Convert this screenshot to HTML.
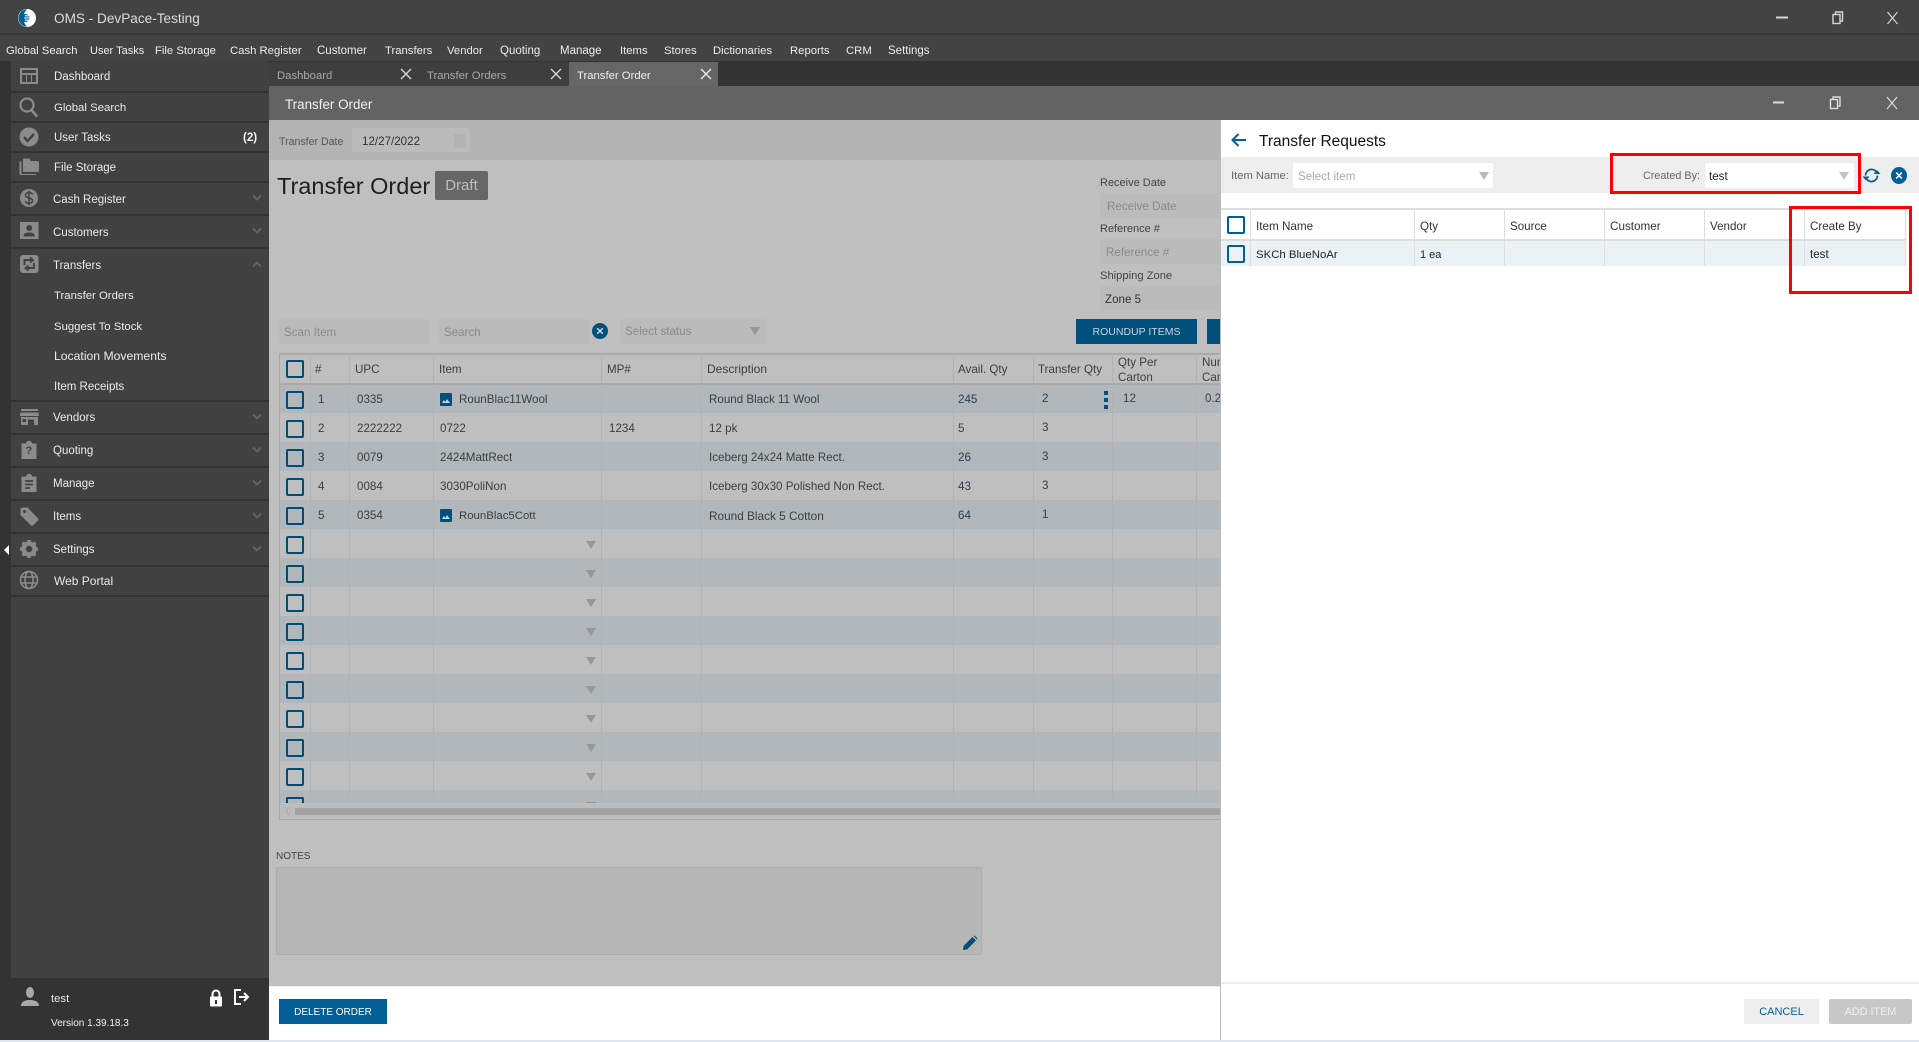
<!DOCTYPE html>
<html lang="en"><head><meta charset="utf-8"><title>OMS - DevPace-Testing</title>
<style>
html,body{margin:0;padding:0;width:1919px;height:1042px;overflow:hidden;background:#fff}
body{position:relative;font:11.6px/16px "Liberation Sans",Arial,sans-serif;color:#3a3a3a}
div,span,svg{position:absolute;box-sizing:border-box}
.t{white-space:nowrap;height:16px}
.m{color:#ececec;top:43px;font-size:11.3px}
.s{color:#eaeaea;left:54px;font-size:11.5px}
.sep{left:11px;width:258px;height:2px;background:#333}
.chev{left:251px;width:12px;height:8px}
.ic{left:17px;width:24px;height:24px;fill:#8b8b8b}
.tab{top:62px;height:24px;width:150px;background:#3e3e3e;color:#a9a9a9;padding:6px 0 0 8px;font-size:11.3px}
.cb{left:286px;width:18px;height:18px;border:2px solid #004c75;border-radius:2px}
.cbr{left:1227px;width:18px;height:18px;border:2px solid #005f96;border-radius:2px}
.row{left:280px;width:941px;height:29px}
.c{background:#b1b7ba}
.v{top:353px;width:1px;height:450px;background:#b0b2b3}
.vr{top:209px;width:1px;height:57px;background:#d9dfe2}
.tri{left:587px;width:0;height:0;border-left:5px solid transparent;border-right:5px solid transparent;border-top:8px solid #979797}
.in{background:#bbb;border-radius:2px;color:#8a8a8a;padding:6px 0 0 5px;height:25px}
.d{color:#3d3d3d;transform:translateY(1px)}
.r{color:#222}
.lb{font-size:11px;color:#444}
.redbox{border:3px solid #f00;background:transparent}
</style></head><body>

<!-- title bar -->
<div style="left:0;top:0;width:1919px;height:62px;background:#434343"></div>
<div style="left:0;top:33px;width:1919px;height:2px;background:#363636"></div>
<svg style="left:17px;top:8px;width:20px;height:20px" viewBox="0 0 20 20"><circle cx="10" cy="10" r="9" fill="#fff"/><path d="M10 1.400A8.600 8.600 0 0 0 10 18.600Q5.500 14 7 10Q5.500 6 10 1.400Z" fill="#005f96"/><circle cx="8.500" cy="10" r="4" fill="#005f96"/><path d="M8 7.800h4M7 10h6M8 12.200h4" stroke="#fff" stroke-width="1.100"/></svg>
<div class="t" style="left:54px;top:11px;font-size:13.6px;color:#dcdcdc">OMS - DevPace-Testing</div>
<svg style="left:1775px;top:9px;width:130px;height:18px" viewBox="0 0 130 18" fill="none" stroke="#d5d5d5" stroke-width="1.400"><path d="M1 8.500h12" stroke-width="2"/><rect x="58" y="5.500" width="7" height="9"/><path d="M60.500 5V3h7v9h-2"/><path d="M112.500 3l10 12M122.500 3l-10 12" stroke-width="1.200"/></svg>
<div class="t m" style="left:6px">Global Search</div>
<div class="t m" style="left:90px;font-size:11px">User Tasks</div>
<div class="t m" style="left:155px">File Storage</div>
<div class="t m" style="left:230px">Cash Register</div>
<div class="t m" style="left:317px;font-size:11.5px">Customer</div>
<div class="t m" style="left:385px">Transfers</div>
<div class="t m" style="left:447px">Vendor</div>
<div class="t m" style="left:500px;font-size:11.5px">Quoting</div>
<div class="t m" style="left:560px;font-size:11.5px">Manage</div>
<div class="t m" style="left:620px">Items</div>
<div class="t m" style="left:664px">Stores</div>
<div class="t m" style="left:713px">Dictionaries</div>
<div class="t m" style="left:790px">Reports</div>
<div class="t m" style="left:846px">CRM</div>
<div class="t m" style="left:888px;font-size:11.5px">Settings</div>

<!-- sidebar -->
<div style="left:0;top:61px;width:11px;height:979px;background:#333"></div>
<div style="left:11px;top:61px;width:258px;height:917px;background:#414141"></div>
<div style="left:0;top:978px;width:269px;height:62px;background:#333"></div>
<div style="left:4px;top:545px;width:0;height:0;border-top:5px solid transparent;border-bottom:5px solid transparent;border-right:5px solid #fff"></div>

<div class="sep" style="top:91px"></div><div class="sep" style="top:121px"></div><div class="sep" style="top:151px"></div><div class="sep" style="top:181px"></div><div class="sep" style="top:214px"></div><div class="sep" style="top:247px"></div><div class="sep" style="top:400px"></div><div class="sep" style="top:433px"></div><div class="sep" style="top:466px"></div><div class="sep" style="top:499px"></div><div class="sep" style="top:532px"></div><div class="sep" style="top:565px"></div><div class="sep" style="top:595px"></div>

<svg class="ic" style="top:65px" viewBox="0 0 24 24"><path d="M3 3h18v16H3z M5 5v3h14V5z M5 10v7h4v-7z M10 10v7h4v-7z M15 10v7h4v-7z" fill-rule="evenodd"/></svg>
<svg class="ic" style="top:95px" viewBox="0 0 24 24" fill="none" stroke="#8b8b8b" stroke-width="2.200"><circle cx="10" cy="10" r="6.500" fill="none"/><path d="M14.500 15l5.500 6.500" stroke-width="2.600"/></svg>
<svg class="ic" style="top:125px" viewBox="0 0 24 24"><circle cx="12" cy="12" r="9.500"/><path d="M7 12l3.500 4 6.500-7" fill="none" stroke="#414141" stroke-width="2.400"/></svg>
<svg class="ic" style="top:155px" viewBox="0 0 24 24"><path d="M6 5c0-1 .5-1.500 1.500-1.500h5L14 6h6.500c1 0 1.500.5 1.500 1.500V17H6z"/><path d="M2.500 6.500H4.500V19H19v1H4c-1 0-1.500-.5-1.500-1.500z"/></svg>
<svg class="ic" style="top:186px" viewBox="0 0 24 24"><circle cx="12" cy="12" r="9"/><path d="M15.500 8.500c-.5-1.500-2-2-3.500-2-2 0-3.500 1-3.500 2.700 0 3.600 7 2 7 5.600 0 1.700-1.500 2.700-3.500 2.700s-3.200-.8-3.700-2.300M12 4.800v14.400" fill="none" stroke="#414141" stroke-width="1.500"/></svg>
<svg class="ic" style="top:219px" viewBox="0 0 24 24"><path d="M3 3h18.500v17H3z"/><circle cx="12.200" cy="9" r="3" fill="#414141"/><path d="M6.500 17.500c0-3 2.500-4 5.700-4s5.700 1 5.700 4z" fill="#414141"/></svg>
<svg class="ic" style="top:252px" viewBox="0 0 24 24"><rect x="3" y="3" width="18.500" height="18" rx="3"/><path d="M7.500 13V8h7.500M13 5.500L16 8l-3 2.500M17 11v5H9.500M11.500 13.500L8.500 16l3 2.500" fill="none" stroke="#414141" stroke-width="1.900"/></svg>
<svg class="ic" style="top:405px" viewBox="0 0 24 24"><path d="M4 4h17v2H4z"/><path d="M3.500 7.500h18L22 11H3z"/><path d="M4 12h17v8h-4v-5.500h-6V20H4zM5.500 14v3h3.500v-3z" fill-rule="evenodd"/></svg>
<svg class="ic" style="top:438px" viewBox="0 0 24 24"><path d="M4.500 5.500h4.500c0-3.500 6-3.500 6 0h4.500V21h-15z"/></svg>
<div class="t" style="left:25.500px;top:443px;font-size:11px;font-weight:bold;color:#414141">?</div>
<svg class="ic" style="top:471px" viewBox="0 0 24 24"><path d="M4.500 5.500h4.500c0-3.500 6-3.500 6 0h4.500V21h-15z"/><path d="M8 10h8M8 13.500h8M8 17h5" stroke="#414141" stroke-width="1.700"/></svg>
<svg class="ic" style="top:504px" viewBox="0 0 24 24"><path d="M3.500 4.500C4 4 5 3.500 6 3.500h4.500L21 14.500c.5.800.5 1.500 0 2L16 21.500c-.8.500-1.500.5-2 0L3.500 11z"/><circle cx="7.500" cy="7.500" r="1.500" fill="#414141"/></svg>
<svg class="ic" style="top:537px" viewBox="0 0 24 24"><circle cx="12" cy="12" r="5.500" fill="none" stroke="#8b8b8b" stroke-width="4.500"/><path d="M12 3v18M3 12h18M5.600 5.600l12.800 12.800M18.400 5.600L5.600 18.400" stroke="#8b8b8b" stroke-width="3.400"/><circle cx="12" cy="12" r="3.200" fill="#414141"/></svg>
<svg class="ic" style="top:568px" viewBox="0 0 24 24" fill="none" stroke="#8b8b8b" stroke-width="1.600"><circle cx="12" cy="12" r="8.500" fill="none"/><ellipse cx="12" cy="12" rx="4" ry="8.500" fill="none"/><path d="M3.500 9h17M3.500 15h17"/></svg>

<div class="t s" style="top:69px">Dashboard</div>
<div class="t s" style="top:100px;font-size:11.4px">Global Search</div>
<div class="t s" style="top:130px">User Tasks</div>
<div class="t" style="left:243px;top:130px;color:#f2f2f2;font-weight:bold">(2)</div>
<div class="t s" style="top:160px">File Storage</div>
<div class="t s" style="top:192px;left:53px">Cash Register</div>
<div class="t s" style="top:225px;left:53px">Customers</div>
<div class="t s" style="top:258px;left:53px">Transfers</div>
<div class="t s" style="top:288px;font-size:11.35px">Transfer Orders</div>
<div class="t s" style="top:319px;font-size:11.35px">Suggest To Stock</div>
<div class="t s" style="top:348px;font-size:12.2px">Location Movements</div>
<div class="t s" style="top:379px">Item Receipts</div>
<div class="t s" style="top:410px;left:53px">Vendors</div>
<div class="t s" style="top:443px;left:53px">Quoting</div>
<div class="t s" style="top:476px;left:53px">Manage</div>
<div class="t s" style="top:509px;left:53px">Items</div>
<div class="t s" style="top:542px;left:53px">Settings</div>
<div class="t s" style="top:573px;font-size:12px">Web Portal</div>

<svg class="chev" style="top:194px" viewBox="0 0 12 8"><path d="M2 1.500l4 4 4-4" fill="none" stroke="#636363" stroke-width="2"/></svg>
<svg class="chev" style="top:227px" viewBox="0 0 12 8"><path d="M2 1.500l4 4 4-4" fill="none" stroke="#636363" stroke-width="2"/></svg>
<svg class="chev" style="top:260px" viewBox="0 0 12 8"><path d="M2 6.500l4-4 4 4" fill="none" stroke="#636363" stroke-width="2"/></svg>
<svg class="chev" style="top:413px" viewBox="0 0 12 8"><path d="M2 1.500l4 4 4-4" fill="none" stroke="#636363" stroke-width="2"/></svg>
<svg class="chev" style="top:446px" viewBox="0 0 12 8"><path d="M2 1.500l4 4 4-4" fill="none" stroke="#636363" stroke-width="2"/></svg>
<svg class="chev" style="top:479px" viewBox="0 0 12 8"><path d="M2 1.500l4 4 4-4" fill="none" stroke="#636363" stroke-width="2"/></svg>
<svg class="chev" style="top:512px" viewBox="0 0 12 8"><path d="M2 1.500l4 4 4-4" fill="none" stroke="#636363" stroke-width="2"/></svg>
<svg class="chev" style="top:545px" viewBox="0 0 12 8"><path d="M2 1.500l4 4 4-4" fill="none" stroke="#636363" stroke-width="2"/></svg>

<svg style="left:19px;top:986px;width:22px;height:22px" viewBox="0 0 22 22" fill="#a8a8a8"><ellipse cx="11" cy="6.500" rx="4" ry="5.500"/><path d="M2 20c0-5 5-6 9-6s9 1 9 6z"/></svg>
<div class="t" style="left:51px;top:991px;color:#e8e8e8;font-size:11.3px">test</div>
<svg style="left:208px;top:989px;width:16px;height:18px" viewBox="0 0 16 18"><path d="M4.500 8V5a3.500 3.500 0 0 1 7 0v3" fill="none" stroke="#fff" stroke-width="2"/><rect x="2" y="7.500" width="12" height="10" rx="1" fill="#fff"/><rect x="7" y="11" width="2" height="4" fill="#333"/></svg>
<svg style="left:233px;top:988px;width:18px;height:18px" viewBox="0 0 18 18" fill="none" stroke="#fff" stroke-width="2"><path d="M8 2H2v14h6"/><path d="M6 9h9M11 5l4 4-4 4"/></svg>
<div class="t" style="left:51px;top:1016px;color:#f0f0f0;font-size:10px">Version 1.39.18.3</div>

<!-- tabs -->
<div style="left:269px;top:61px;width:1650px;height:25px;background:#333"></div>
<div class="tab" style="left:269px">Dashboard</div>
<div class="tab" style="left:419px;width:150px">Transfer Orders</div>
<div class="tab" style="left:569px;width:149px;background:#666;color:#f0f0f0">Transfer Order</div>
<svg style="left:400px;top:68px;width:12px;height:12px" viewBox="0 0 12 12"><path d="M1 1l10 10M11 1L1 11" stroke="#d8d8d8" stroke-width="1.300"/></svg>
<svg style="left:550px;top:68px;width:12px;height:12px" viewBox="0 0 12 12"><path d="M1 1l10 10M11 1L1 11" stroke="#d8d8d8" stroke-width="1.300"/></svg>
<svg style="left:700px;top:68px;width:12px;height:12px" viewBox="0 0 12 12"><path d="M1 1l10 10M11 1L1 11" stroke="#eee" stroke-width="1.300"/></svg>

<!-- modal header -->
<div style="left:269px;top:86px;width:1650px;height:34px;background:#636363"></div>
<div class="t" style="left:285px;top:97px;font-size:13.4px;color:#f0f0f0">Transfer Order</div>
<svg style="left:1772px;top:94px;width:130px;height:18px" viewBox="0 0 130 18" fill="none" stroke="#dcdcdc" stroke-width="1.400"><path d="M1 8.500h11" stroke-width="2"/><rect x="58.500" y="5.500" width="7" height="9"/><path d="M61 5V3h7v9h-2"/><path d="M115 3l10 12M125 3l-10 12" stroke-width="1.200"/></svg>

<!-- dimmed content -->
<div style="left:269px;top:120px;width:952px;height:866px;background:#bfbfbf"></div>
<div style="left:269px;top:120px;width:952px;height:40px;background:#b3b3b3"></div>
<div class="t" style="left:279px;top:134px;font-size:10.6px;color:#555">Transfer Date</div>
<div class="in" style="left:352px;top:128px;width:118px;height:24px;color:#333;padding-left:10px">12/27/2022</div>
<svg style="left:453px;top:131px;width:14px;height:18px" viewBox="0 0 14 18"><path d="M1 3h12v14H1z" fill="#b3b3b3"/></svg>

<div class="t" style="left:277px;top:172px;font-size:23.500px;line-height:28px;height:28px;color:#1f1f1f">Transfer Order</div>
<div style="left:435px;top:171px;width:53px;height:29px;background:#666;border-radius:2px;color:#bdbdbd;font-size:15px;line-height:29px;text-align:center">Draft</div>

<div class="t lb" style="left:1100px;top:175px">Receive Date</div>
<div class="in" style="left:1100px;top:193px;width:125px;font-size:11.6px;padding-left:7px">Receive Date</div>
<div class="t lb" style="left:1100px;top:221px">Reference #</div>
<div class="in" style="left:1100px;top:239px;width:125px;padding-left:6px">Reference #</div>
<div class="t lb" style="left:1100px;top:268px;font-size:11.2px">Shipping Zone</div>
<div class="in" style="left:1100px;top:286px;width:125px;color:#333">Zone 5</div>

<div class="in" style="left:279px;top:319px;width:150px">Scan Item</div>
<div class="in" style="left:439px;top:319px;width:150px">Search</div>
<svg style="left:592px;top:323px;width:16px;height:16px" viewBox="0 0 16 16"><circle cx="8" cy="8" r="8" fill="#004f7d"/><path d="M5.200 5.200l5.600 5.600M10.800 5.200l-5.600 5.600" stroke="#ddd" stroke-width="1.400"/></svg>
<div class="in" style="left:620px;top:319px;width:147px;padding-top:5px">Select status</div>
<div class="tri" style="left:750px;top:327px"></div>
<div style="left:1076px;top:319px;width:121px;height:25px;background:#004f7d;color:#c8d5de;text-align:center;line-height:27px;font-size:10.5px">ROUNDUP ITEMS</div>
<div style="left:1207px;top:319px;width:14px;height:25px;background:#004f7d"></div>

<!-- left grid -->
<div style="left:279px;top:353px;width:942px;height:467px;border-left:1px solid #a8a8a8;border-top:2px solid #aaa;border-bottom:1px solid #a8a8a8"></div>
<div class="row c" style="top:384px"></div><div class="row c" style="top:442px"></div><div class="row c" style="top:500px"></div><div class="row c" style="top:558px"></div><div class="row c" style="top:616px"></div><div class="row c" style="top:674px"></div><div class="row c" style="top:732px"></div><div class="row c" style="top:790px;height:13px"></div>
<div style="left:280px;top:383px;width:941px;height:2px;background:#a9a9a9"></div>
<div class="v" style="left:310px"></div><div class="v" style="left:349px"></div><div class="v" style="left:433px"></div><div class="v" style="left:601px"></div><div class="v" style="left:701px"></div><div class="v" style="left:953px"></div><div class="v" style="left:1033px"></div><div class="v" style="left:1112px"></div><div class="v" style="left:1196px"></div>

<div class="cb" style="top:360px"></div><div class="cb" style="top:391px"></div><div class="cb" style="top:420px"></div><div class="cb" style="top:449px"></div><div class="cb" style="top:478px"></div><div class="cb" style="top:507px"></div><div class="cb" style="top:536px"></div><div class="cb" style="top:565px"></div><div class="cb" style="top:594px"></div><div class="cb" style="top:623px"></div><div class="cb" style="top:652px"></div><div class="cb" style="top:681px"></div><div class="cb" style="top:710px"></div><div class="cb" style="top:739px"></div><div class="cb" style="top:768px"></div>
<div class="cb" style="top:797px;height:6px;border-bottom:0;border-radius:2px 2px 0 0"></div>

<div class="t d" style="left:315px;top:361px">#</div>
<div class="t d" style="left:355px;top:361px">UPC</div>
<div class="t d" style="left:439px;top:361px">Item</div>
<div class="t d" style="left:607px;top:361px">MP#</div>
<div class="t d" style="left:707px;top:360px;font-size:12px">Description</div>
<div class="t d" style="left:958px;top:361px">Avail. Qty</div>
<div class="t d" style="left:1038px;top:361px">Transfer Qty</div>
<div class="t d" style="left:1118px;top:354px">Qty Per</div>
<div class="t d" style="left:1118px;top:369px">Carton</div>
<div class="t d" style="left:1202px;top:354px;width:18px;overflow:hidden">Num</div>
<div class="t d" style="left:1202px;top:369px;width:18px;overflow:hidden">Car</div>

<div class="t d" style="left:318px;top:391px">1</div><div class="t d" style="left:357px;top:391px">0335</div>
<svg style="left:440px;top:393px;width:12px;height:13px" viewBox="0 0 12 13"><rect width="12" height="13" rx="1" fill="#004f7d"/><path d="M2 10l2-3 1.500 2 1.500-3 3 4z" fill="#c8d5de"/></svg>
<div class="t d" style="left:459px;top:391px">RounBlac11Wool</div>
<div class="t d" style="left:709px;top:391px">Round Black 11 Wool</div>
<div class="t d" style="left:958px;top:391px;color:#2c3f52">245</div>
<div class="t d" style="left:1042px;top:390px">2</div>
<div style="left:1104px;top:391px;width:4px;height:4px;background:#004f7d"></div><div style="left:1104px;top:398px;width:4px;height:4px;background:#004f7d"></div><div style="left:1104px;top:405px;width:4px;height:4px;background:#004f7d"></div>
<div class="t d" style="left:1123px;top:390px">12</div>
<div class="t d" style="left:1205px;top:390px;width:16px;overflow:hidden">0.25</div>

<div class="t d" style="left:318px;top:420px">2</div><div class="t d" style="left:357px;top:420px">2222222</div><div class="t d" style="left:440px;top:420px">0722</div><div class="t d" style="left:609px;top:420px">1234</div><div class="t d" style="left:709px;top:420px">12 pk</div><div class="t d" style="left:958px;top:420px;color:#2c3f52">5</div><div class="t d" style="left:1042px;top:419px">3</div>
<div class="t d" style="left:318px;top:449px">3</div><div class="t d" style="left:357px;top:449px">0079</div><div class="t d" style="left:440px;top:449px">2424MattRect</div><div class="t d" style="left:709px;top:449px">Iceberg 24x24 Matte Rect.</div><div class="t d" style="left:958px;top:449px;color:#2c3f52">26</div><div class="t d" style="left:1042px;top:448px">3</div>
<div class="t d" style="left:318px;top:478px">4</div><div class="t d" style="left:357px;top:478px">0084</div><div class="t d" style="left:440px;top:478px">3030PoliNon</div><div class="t d" style="left:709px;top:478px">Iceberg 30x30 Polished Non Rect.</div><div class="t d" style="left:958px;top:478px;color:#2c3f52">43</div><div class="t d" style="left:1042px;top:477px">3</div>
<div class="t d" style="left:318px;top:507px">5</div><div class="t d" style="left:357px;top:507px">0354</div>
<svg style="left:440px;top:509px;width:12px;height:13px" viewBox="0 0 12 13"><rect width="12" height="13" rx="1" fill="#004f7d"/><path d="M2 10l2-3 1.500 2 1.500-3 3 4z" fill="#c8d5de"/></svg>
<div class="t d" style="left:459px;top:507px;font-size:11.4px">RounBlac5Cott</div><div class="t d" style="left:709px;top:507px;font-size:11.8px">Round Black 5 Cotton</div><div class="t d" style="left:958px;top:507px;color:#2c3f52">64</div><div class="t d" style="left:1042px;top:506px">1</div>

<div class="tri" style="left:586px;top:541px"></div><div class="tri" style="left:586px;top:570px"></div><div class="tri" style="left:586px;top:599px"></div><div class="tri" style="left:586px;top:628px"></div><div class="tri" style="left:586px;top:657px"></div><div class="tri" style="left:586px;top:686px"></div><div class="tri" style="left:586px;top:715px"></div><div class="tri" style="left:586px;top:744px"></div><div class="tri" style="left:586px;top:773px"></div>
<div style="left:586px;top:802px;width:10px;height:1px;background:#979797"></div>

<div style="left:280px;top:803px;width:941px;height:16px;background:#bdbdbd"></div>
<div style="left:295px;top:808px;width:926px;height:7px;background:#a3a3a3"></div>
<svg style="left:284px;top:806px;width:8px;height:10px" viewBox="0 0 8 10"><path d="M5 1L2 5l3 4" fill="none" stroke="#aaa" stroke-width="1"/></svg>

<div class="t" style="left:276px;top:849px;font-size:10px;color:#444">NOTES</div>
<div style="left:276px;top:867px;width:706px;height:88px;background:#b6b6b6;border:1px solid #aeaeae;border-radius:2px"></div>
<svg style="left:962px;top:935px;width:16px;height:16px" viewBox="0 0 16 16"><path d="M1 15l.5-4L10.500 2l3.500 3.500L5 14.500z" fill="#004f7d"/><path d="M11.500 1l1-.5 3 3-.5 1z" fill="#004f7d"/></svg>

<!-- bottom bar -->
<div style="left:269px;top:986px;width:952px;height:54px;background:#fff;border-top:1px solid #eee"></div>
<div style="left:279px;top:999px;width:108px;height:25px;background:#005f96;color:#fff;text-align:center;line-height:28px;font-size:10px">DELETE ORDER</div>
<div style="left:0;top:1040px;width:1919px;height:2px;background:#dfe6f0"></div>

<!-- right panel -->
<div style="left:1221px;top:120px;width:698px;height:920px;background:#fff"></div>
<svg style="left:1230px;top:132px;width:18px;height:16px" viewBox="0 0 18 16" fill="none" stroke="#005f96" stroke-width="2"><path d="M16 8H3M8.500 2L2.500 8l6 6"/></svg>
<div class="t" style="left:1259px;top:133px;height:18px;line-height:18px;font-size:15.500px;color:#111">Transfer Requests</div>
<div style="left:1221px;top:157px;width:698px;height:36px;background:#eee"></div>
<div class="t" style="left:1231px;top:168px;font-size:11.2px;color:#666">Item Name:</div>
<div style="left:1293px;top:163px;width:200px;height:25px;background:#fff;border-radius:2px;color:#aaa;padding:6px 0 0 5px">Select item</div>
<div class="tri" style="left:1479px;top:172px;border-top-color:#bbb"></div>
<div class="t" style="left:1643px;top:168px;font-size:10.8px;color:#666">Created By:</div>
<div style="left:1705px;top:163px;width:149px;height:25px;background:#fff;border-radius:2px;color:#222;padding:6px 0 0 4px">test</div>
<div class="tri" style="left:1839px;top:172px;border-top-color:#c4c4c4"></div>
<svg style="left:1862px;top:167px;width:19px;height:17px" viewBox="0 0 19 17" fill="none" stroke="#005f96" stroke-width="1.800"><path d="M3.500 8.500a6 6 0 0 1 10.500-4"/><path d="M15.500 8.500a6 6 0 0 1-10.500 4"/><path d="M11.500 7.500h7L15 3.500z" fill="#005f96" stroke="none" transform="translate(0,-.5)"/><path d="M0.500 9.500h7L4 13.500z" fill="#005f96" stroke="none"/></svg>
<svg style="left:1891px;top:167px;width:16px;height:17px" viewBox="0 0 16 17"><ellipse cx="8" cy="8.500" rx="8" ry="8.500" fill="#005f96"/><path d="M5.200 5.500l5.600 6M10.800 5.500l-5.600 6" stroke="#fff" stroke-width="1.600"/></svg>

<div style="left:1221px;top:208px;width:684px;height:2px;background:#ddd"></div>
<div style="left:1221px;top:239px;width:684px;height:2px;background:#ddd"></div>
<div style="left:1221px;top:241px;width:684px;height:25px;background:#eaf2f6"></div>
<div class="vr" style="left:1250px"></div><div class="vr" style="left:1414px"></div><div class="vr" style="left:1504px"></div><div class="vr" style="left:1604px"></div><div class="vr" style="left:1704px"></div><div class="vr" style="left:1804px"></div><div class="vr" style="left:1905px"></div>
<div class="cbr" style="top:216px"></div><div class="cbr" style="top:245px"></div>
<div class="t" style="left:1256px;top:219px;color:#333;font-size:11.7px">Item Name</div>
<div class="t" style="left:1420px;top:219px;color:#333">Qty</div>
<div class="t" style="left:1510px;top:219px;color:#333">Source</div>
<div class="t" style="left:1610px;top:219px;color:#333;font-size:11.7px">Customer</div>
<div class="t" style="left:1710px;top:219px;color:#333">Vendor</div>
<div class="t" style="left:1810px;top:219px;color:#333">Create By</div>
<div class="t r" style="left:1256px;top:247px;font-size:11.4px">SKCh BlueNoAr</div>
<div class="t r" style="left:1420px;top:247px;font-size:11px">1 ea</div>
<div class="t r" style="left:1810px;top:247px">test</div>

<div class="redbox" style="left:1610px;top:153px;width:251px;height:41px"></div>
<div class="redbox" style="left:1789px;top:206px;width:123px;height:88px"></div>

<div style="left:1221px;top:982px;width:698px;height:2px;background:#eee"></div>
<div style="left:1744px;top:999px;width:75px;height:25px;background:#eee;color:#005f96;text-align:center;line-height:27px;font-size:11px">CANCEL</div>
<div style="left:1829px;top:999px;width:83px;height:25px;background:#c8c8c8;border-radius:2px;color:#f1f1f1;text-align:center;line-height:27px;font-size:10.8px">ADD ITEM</div>
<div style="left:1220px;top:120px;width:1px;height:920px;background:#bbb"></div>
</body></html>
